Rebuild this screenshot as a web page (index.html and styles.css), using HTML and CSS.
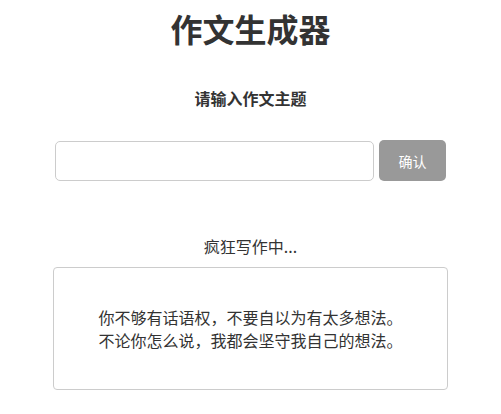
FILE: index.html
```html
<!DOCTYPE html>
<html lang="zh">
<head>
<meta charset="utf-8">
<title>作文生成器</title>
<link rel="stylesheet" href="styles.css">
</head>
<body>
<div class="page">
  <h1 class="title">作文生成器</h1>
  <p class="subtitle">请输入作文主题</p>
  <div class="form-row">
    <input class="topic-input" type="text">
    <button class="confirm-btn" type="button">确认</button>
  </div>
  <p class="status">疯狂写作中...</p>
  <div class="result">
    <p class="result-line">你不够有话语权，不要自以为有太多想法。</p>
    <p class="result-line">不论你怎么说，我都会坚守我自己的想法。</p>
  </div>
</div>
</body>
</html>
```

FILE: styles.css
```css
* {
  box-sizing: border-box;
}

html, body {
  margin: 0;
  padding: 0;
  background: #fff;
}

body {
  font-family: "Noto Sans CJK SC", "Noto Sans", sans-serif;
  color: #333;
}

.page {
  display: flex;
  flex-direction: column;
  align-items: center;
  padding-top: 5px;
}

.title {
  margin: 0;
  font-size: 32px;
  line-height: 46px;
  font-weight: 700;
}

.subtitle {
  margin: 35px 0 0;
  font-size: 16px;
  line-height: 24px;
  font-weight: 700;
}

.form-row {
  margin-top: 30px;
  display: flex;
  gap: 5px;
  align-items: flex-start;
}

.topic-input {
  width: 319px;
  height: 40px;
  margin-top: 1px;
  border: 1px solid #ccc;
  border-radius: 5px;
  padding: 0 10px;
  font-size: 14px;
  outline: none;
}

.confirm-btn {
  width: 67px;
  height: 41px;
  border: none;
  border-radius: 5px;
  background: #999;
  color: #fff;
  font-family: inherit;
  font-size: 14px;
  padding: 0;
}

.status {
  margin: 53px 0 0;
  font-size: 16px;
  line-height: 24px;
}

.result {
  margin-top: 9px;
  width: 395px;
  height: 123px;
  border: 1px solid #ccc;
  border-radius: 4px;
  display: flex;
  flex-direction: column;
  justify-content: center;
  align-items: center;
}

.result-line {
  margin: 0;
  font-size: 16px;
  line-height: 23px;
}
```
